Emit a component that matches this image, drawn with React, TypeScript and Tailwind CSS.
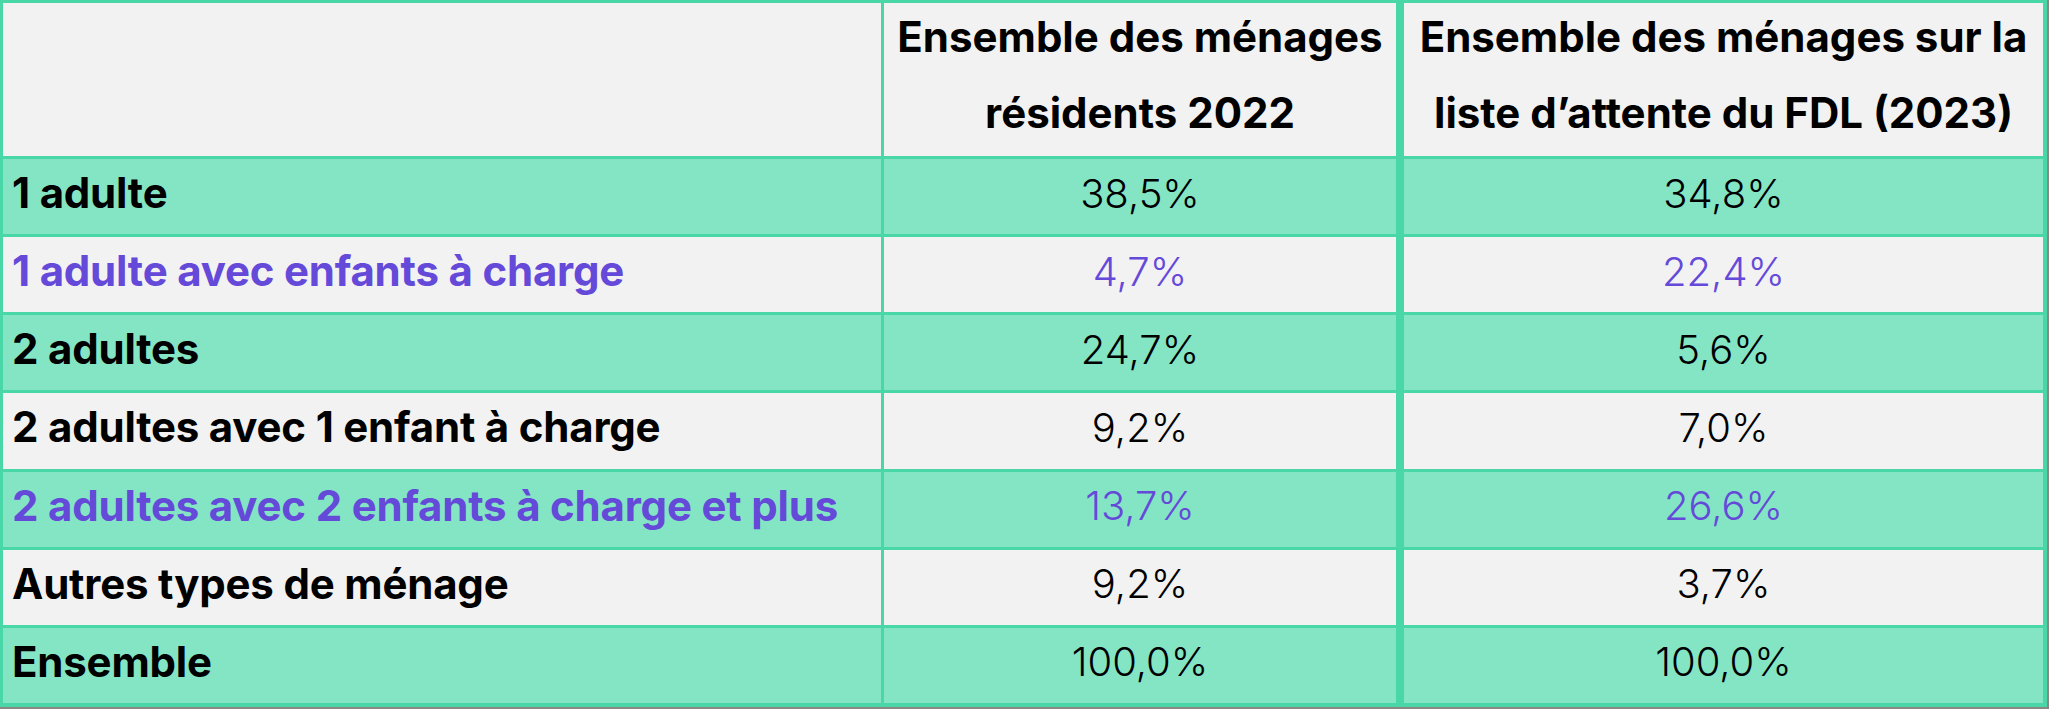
type Row = {
  label: string;
  resident: string;
  waiting: string;
  green: boolean;
  purple?: boolean;
};

const rows: Row[] = [
  { label: "1 adulte", resident: "38,5%", waiting: "34,8%", green: true },
  { label: "1 adulte avec enfants à charge", resident: "4,7%", waiting: "22,4%", green: false, purple: true },
  { label: "2 adultes", resident: "24,7%", waiting: "5,6%", green: true },
  { label: "2 adultes avec 1 enfant à charge", resident: "9,2%", waiting: "7,0%", green: false },
  { label: "2 adultes avec 2 enfants à charge et plus", resident: "13,7%", waiting: "26,6%", green: true, purple: true },
  { label: "Autres types de ménage", resident: "9,2%", waiting: "3,7%", green: false },
  { label: "Ensemble", resident: "100,0%", waiting: "100,0%", green: true },
];

export default function App() {
  return (
    <div className="w-[2049px] h-[709px] bg-[#8a8784] font-['Inter',sans-serif]">
      <div className="w-[2047px] h-[707px] bg-[#4ad7a7] pt-[3px] pl-[3px] pr-[4px] pb-[4px]">
        <div className="grid h-full grid-cols-[878px_512px_644px] grid-rows-[153px_repeat(7,minmax(0,1fr))] gap-[3px]">
          {/* header */}
          <div className="bg-[#f2f2f2]" />
          <div className="flex flex-col items-center justify-center pb-[10px] bg-[#f2f2f2] text-[42px] font-bold leading-[76px] text-black">
            <span>Ensemble des ménages</span>
            <span>résidents 2022</span>
          </div>
          <div className="flex flex-col items-center justify-center pb-[10px] border-l-[5px] border-[#4ad7a7] bg-[#f2f2f2] text-[42px] font-bold leading-[76px] text-black">
            <span>Ensemble des ménages sur la</span>
            <span>liste d’attente du FDL (2023)</span>
          </div>

          {rows.map((r) => {
            const bg = r.green ? "bg-[#84e5c4]" : "bg-[#f2f2f2]";
            const color = r.purple ? "text-[#6549d9]" : "text-black";
            return (
              <div key={r.label} className="contents">
                <div className={`flex items-center pl-[9px] pb-[8px] text-[42px] font-bold tracking-[-0.2px] ${bg} ${color}`}>
                  {r.label}
                </div>
                <div className={`flex items-center justify-center pb-[6px] text-[40px] font-light ${bg} ${color}`}>
                  {r.resident}
                </div>
                <div className={`flex items-center justify-center pb-[6px] border-l-[5px] border-[#4ad7a7] text-[40px] font-light ${bg} ${color}`}>
                  {r.waiting}
                </div>
              </div>
            );
          })}
        </div>
      </div>
    </div>
  );
}
